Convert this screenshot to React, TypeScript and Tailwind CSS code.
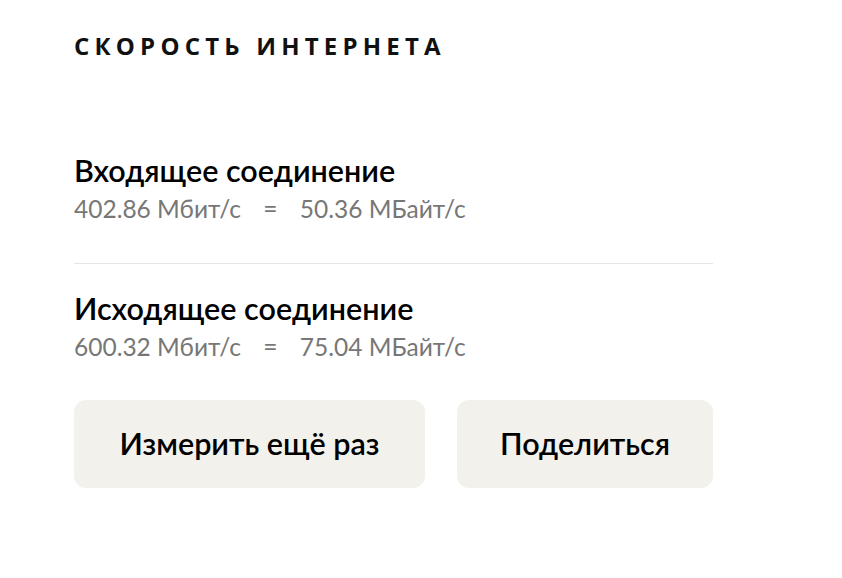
import React from 'react';

const rows = [
  { title: 'Входящее соединение', mbit: '402.86', mbyte: '50.36' },
  { title: 'Исходящее соединение', mbit: '600.32', mbyte: '75.04' },
];

export default function App() {
  return (
    <div className="min-h-[578px] w-[842px] bg-white pl-[74px] pt-[30px] font-['Lato','Noto_Sans',sans-serif] text-black">
      <h1 className="font-['Open_Sans',sans-serif] text-[24px] font-bold leading-[32px] tracking-[5.2px] text-[#111]">
        СКОРОСТЬ ИНТЕРНЕТА
      </h1>
      <div className="mt-[90px] w-[639px]">
        {rows.map((r, i) => (
          <div key={r.title} className={i > 0 ? 'border-t border-[#e5e5e5] pt-[26px]' : 'pb-[39px]'}>
            <div className="text-[30.5px] font-semibold leading-[36px]">{r.title}</div>
            <div className="mt-[6px] text-[24.5px] leading-[30px] text-[#777]">
              {r.mbit} Мбит/с <span className="mx-[16px]">=</span> {r.mbyte} МБайт/с
            </div>
          </div>
        ))}
        <div className="mt-[38px] flex gap-[32px]">
          <button className="h-[88px] w-[351px] rounded-[12px] bg-[#f2f1ec] text-[30.5px] font-semibold">
            Измерить ещё раз
          </button>
          <button className="h-[88px] w-[256px] rounded-[12px] bg-[#f2f1ec] text-[30.5px] font-semibold">
            Поделиться
          </button>
        </div>
      </div>
    </div>
  );
}
